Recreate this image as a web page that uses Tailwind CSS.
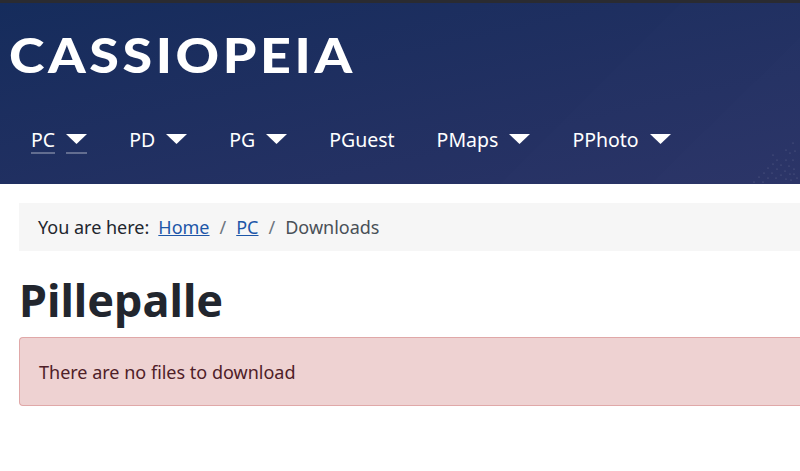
<!DOCTYPE html>
<html lang="en">
<head>
    <meta charset="UTF-8">
    <meta name="viewport" content="width=device-width, initial-scale=1.0">
    <title>Pillepalle - Downloads</title>
    <script src="https://cdn.jsdelivr.net/npm/@tailwindcss/browser@4"></script>
</head>
<body class="bg-white min-h-screen overflow-hidden font-['Noto_Sans','Open_Sans',sans-serif]">
    <!-- Top strip -->
    <div class="h-[3px] bg-[#2a2b31]"></div>

    <!-- Header -->
    <header class="relative h-[181px] overflow-hidden bg-gradient-to-br from-[#152c5c] to-[#2a3366]">
        <!-- Diagonal bands -->
        <svg class="absolute inset-0" width="800" height="181" viewBox="0 0 800 181" fill="#fff" fill-opacity="0.008">
            <path d="M800 34V181H650z"/>
            <path d="M800 -120V181H500z"/>
        </svg>
        <div class="relative pt-[26px] pl-[9px] h-[125px]">
            <a href="#" class="block origin-left scale-x-[1.12] text-white font-['Lato',sans-serif] font-black text-[48px] leading-[52px] tracking-[3.2px]">CASSIOPEIA</a>
        </div>
        <!-- Nav -->
        <nav class="relative flex items-start pl-[31px] text-white text-[19.5px] leading-[24px]">
            <div class="flex items-start gap-[11px] mr-[42px]">
                <a href="#" class="border-b-2 border-white/30">PC</a>
                <span class="border-b-2 border-white/30 pt-[6px] pb-[8px]"><svg width="21" height="10" viewBox="0 0 21 10" class="block"><path d="M0 0h21L10.5 10z" fill="#fff"/></svg></span>
            </div>
            <div class="flex items-start gap-[11px] mr-[42px]">
                <a href="#">PD</a>
                <span class="pt-[6px]"><svg width="21" height="10" viewBox="0 0 21 10" class="block"><path d="M0 0h21L10.5 10z" fill="#fff"/></svg></span>
            </div>
            <div class="flex items-start gap-[11px] mr-[42px]">
                <a href="#">PG</a>
                <span class="pt-[6px]"><svg width="21" height="10" viewBox="0 0 21 10" class="block"><path d="M0 0h21L10.5 10z" fill="#fff"/></svg></span>
            </div>
            <a href="#" class="mr-[42px]">PGuest</a>
            <div class="flex items-start gap-[11px] mr-[42px]">
                <a href="#">PMaps</a>
                <span class="pt-[6px]"><svg width="21" height="10" viewBox="0 0 21 10" class="block"><path d="M0 0h21L10.5 10z" fill="#fff"/></svg></span>
            </div>
            <div class="flex items-start gap-[11px]">
                <a href="#">PPhoto</a>
                <span class="pt-[6px]"><svg width="21" height="10" viewBox="0 0 21 10" class="block"><path d="M0 0h21L10.5 10z" fill="#fff"/></svg></span>
            </div>
        </nav>
        <!-- Dot pattern in the corner -->
        <svg class="absolute right-0 bottom-0" width="50" height="42" viewBox="0 0 50 42" fill="#fff" fill-opacity="0.25">
            <circle cx="43" cy="1" r=".6"/><circle cx="36" cy="8" r=".6"/><circle cx="45" cy="9" r=".6"/><circle cx="23" cy="13" r=".6"/><circle cx="40" cy="11" r=".6"/>
            <circle cx="27" cy="18" r=".6"/><circle cx="36" cy="18" r=".6"/><circle cx="43" cy="18" r=".6"/><circle cx="23" cy="22" r=".6"/><circle cx="31" cy="23" r=".6"/>
            <circle cx="39" cy="24" r=".6"/><circle cx="18" cy="26" r=".6"/><circle cx="27" cy="27" r=".6"/><circle cx="35" cy="29" r=".6"/><circle cx="44" cy="27" r=".6"/>
            <circle cx="14" cy="31" r=".6"/><circle cx="22" cy="31" r=".6"/><circle cx="31" cy="33" r=".6"/><circle cx="40" cy="32" r=".6"/><circle cx="44" cy="32" r=".6"/>
            <circle cx="9" cy="35" r=".6"/><circle cx="18" cy="36" r=".6"/><circle cx="26" cy="36" r=".6"/><circle cx="36" cy="37" r=".6"/><circle cx="41" cy="38" r=".6"/><circle cx="47" cy="36" r=".6"/>
            <circle cx="4" cy="40" r=".6"/><circle cx="13" cy="40" r=".6"/>
        </svg>
    </header>

    <main class="pl-[19px] pt-[19px]">
        <!-- Breadcrumb -->
        <nav class="flex items-center h-[48px] pl-[19px] bg-[#f6f6f6] text-[18px] text-[#22262e]">
            <span class="mr-[9px]">You are here:</span>
            <a href="#" class="underline text-[#1d56a8]">Home</a>
            <span class="mx-[10px] text-[#6d757e]">/</span>
            <a href="#" class="underline text-[#1d56a8]">PC</a>
            <span class="mx-[10px] text-[#6d757e]">/</span>
            <span class="text-[#495057]">Downloads</span>
        </nav>

        <h1 class="mt-[22px] text-[45px] leading-[54px] font-bold text-[#22262e]">Pillepalle</h1>

        <div class="mt-[10px] h-[69px] flex items-center pl-[19px] pt-[2px] bg-[#eed2d2] border border-[#e0a8a8] border-r-0 rounded-l-[4px] text-[18px] text-[#4e2028]">
            There are no files to download
        </div>
    </main>
</body>
</html>
